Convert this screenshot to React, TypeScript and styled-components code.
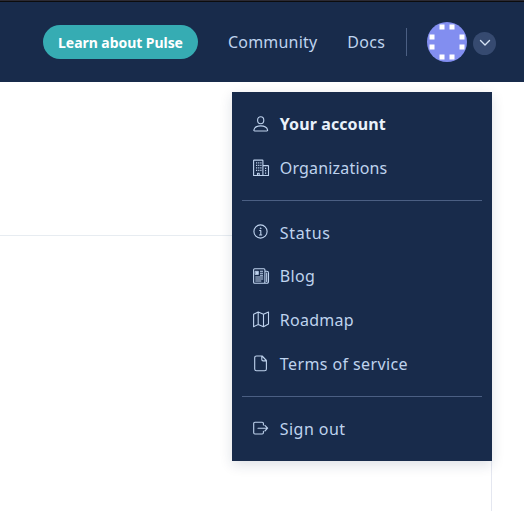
import React from "react";
import styled, { createGlobalStyle } from "styled-components";

const GlobalStyle = createGlobalStyle`
  * { box-sizing: border-box; }
  body { margin: 0; background: #fff; overflow: hidden; font-family: "Noto Sans", Roboto, sans-serif; }
`;

const Page = styled.div`
  position: relative;
  display: flex;
  flex-direction: column;
  width: 524px;
  height: 511px;
`;

const Header = styled.header`
  display: flex;
  align-items: center;
  height: 82px;
  padding: 1px 28px 0 43px;
  background: #182b4b;
  border-top: 1px solid #2b2a33;
  box-shadow: inset 0 1px 0 #0c0c0d;
`;

const PulseButton = styled.button`
  width: 155px;
  height: 34px;
  margin-bottom: 1px;
  padding: 1px 0 0;
  border: 0;
  border-radius: 17px;
  background: #36acb3;
  color: #fff;
  font: 700 14px/34px "Noto Sans", sans-serif;
  letter-spacing: -0.05px;
  white-space: nowrap;
`;

const NavLink = styled.a<{ $spacing: number }>`
  margin-left: 30px;
  margin-bottom: 1px;
  color: #bfd3ee;
  font-size: 16px;
  line-height: 24px;
  letter-spacing: ${(p) => p.$spacing}px;
`;

const Separator = styled.span`
  width: 1px;
  height: 28px;
  margin-left: auto;
  background: #4b5f83;
`;

const Avatar = styled.svg`
  width: 40px;
  height: 40px;
  margin: 0 0 1px 20px;
`;

const Toggle = styled.button`
  display: flex;
  align-items: center;
  justify-content: center;
  width: 23px;
  height: 23px;
  margin: 2px 0 0 6px;
  padding: 0;
  border: 0;
  border-radius: 50%;
  background: #364a70;
`;

const Content = styled.main`
  width: 492px;
  flex: 1;
  margin-top: 153px;
  border-top: 1px solid #e7ecf1;
  border-right: 1px solid #e4e7f0;
`;

const Menu = styled.nav`
  position: absolute;
  top: 92px;
  left: 232px;
  width: 260px;
  height: 369px;
  padding: 10px;
  background: #182b4b;
  box-shadow: 0 4px 12px rgba(24, 43, 75, 0.14);
`;

const MenuItem = styled.a<{ $strong?: boolean; $spacing: number }>`
  display: flex;
  align-items: center;
  height: 43.8px;
  padding-left: 11px;
  gap: 10.8px;
  color: ${(p) => (p.$strong ? "#e9f2fb" : "#bfd3ee")};
  font-size: 16px;
  font-weight: ${(p) => (p.$strong ? 700 : 400)};
  letter-spacing: ${(p) => p.$spacing}px;
  white-space: nowrap;
`;

const Label = styled.span`
  line-height: 20px;
  padding-top: 0.2px;
`;

const Icon = styled.svg.attrs({ viewBox: "0 0 16 16" })`
  width: 16px;
  height: 16px;
  flex: none;
  overflow: visible;
  fill: none;
  stroke: #bfd3ee;
  stroke-width: 1.1;
  stroke-linecap: round;
  stroke-linejoin: round;
`;

const Divider = styled.hr`
  height: 1px;
  margin: 10px 0;
  border: 0;
  background: #4b5f83;
`;

const icons = {
  person: (
    <>
      <ellipse cx="7.7" cy="4.2" rx="3.1" ry="3.5" />
      <path d="M1.6 15h12.2c.6 0 .9-.4.8-.9C14 11.3 11.5 9.9 7.7 9.9S1.4 11.3.9 14.1c-.1.5.2.9.7.9Z" />
    </>
  ),
  building: (
    <>
      <path d="M.6 15.5V.6a.5.5 0 0 1 .5-.5h8.3a.5.5 0 0 1 .5.5v14.9H.6Zm9.3-9.900h5.1a.5.5 0 0 1 .5.5v9.400H9.900M4.500 15.500v-2.300h1.700v2.300" />
      <path d="M3 2.800h5.500M3 5.300h5.500M3 7.800h5.500M3 10.300h5.500M12 8.300h2M12 10.700h2M12 13.100h2M3 12.700v.1M8 12.700v.1" strokeWidth="1.3" strokeDasharray="1.2 0.95" strokeLinecap="butt" />
    </>
  ),
  info: (
    <>
      <circle cx="7.5" cy="7.5" r="6.6" />
      <path d="M6.2 6.500h1.600v4.300M6.100 11h3.100" strokeLinecap="butt" />
      <circle cx="7.5" cy="4.3" r=".5" fill="#bfd3ee" strokeWidth=".6" />
    </>
  ),
  newspaper: (
    <>
      <path d="M1.6.7h9.300c.6 0 1 .4 1 1v12.600c0 .6-.4 1-1 1H1.600c-.6 0-1-.4-1-1V1.700c0-.6.4-1 1-1Zm10.300 2.600h2c1 0 1.600.7 1.600 1.600v8.300c0 1.200-.7 2.100-1.800 2.100h-2.200M13.700 5v8.500" />
      <path d="M2.400 3.300h3v3.200h-3Z" fill="#bfd3ee" strokeWidth=".7" />
      <path d="M7 3.200h3M7 5.200h3M7 7.200h3M2.300 9h7.900M2.300 11h7.900M2.300 13h6" strokeLinecap="butt" />
    </>
  ),
  map: <path d="M.6 2.300 5.200 0l5.300 2.300L15.500 0v12.100l-5 2.600-5.300-2.300-4.600 2.300V2.300ZM5.200 0v12.400M10.500 2.300v12.400" />,
  file: <path d="M3.500 0h5.600l4.300 4.500V13c0 1.100-.8 1.800-1.800 1.800H3.500c-1 0-1.800-.7-1.800-1.800V1.800C1.700.7 2.500 0 3.500 0ZM8.800.2v3.400c0 .8.500 1.300 1.300 1.300h3.100" />,
  exit: <path d="M10.400 3.900V2.500c0-.7-.5-1.200-1.200-1.200H1.900c-.7 0-1.200.5-1.200 1.200v9.300c0 .7.500 1.200 1.200 1.200h7.300c.7 0 1.200-.5 1.200-1.200v-1.400M5 7.200h9.500M11.900 4.400l2.700 2.800-2.700 2.800" />,
};

const dots = [
  [13, 3], [23, 3], [3, 13], [33, 13], [3, 23], [33, 23], [13, 33], [23, 33],
];

type Item = { label: string; icon: keyof typeof icons; spacing: number; strong?: boolean };

const groups: Item[][] = [
  [
    { label: "Your account", icon: "person", spacing: 0.1, strong: true },
    { label: "Organizations", icon: "building", spacing: 0.17 },
  ],
  [
    { label: "Status", icon: "info", spacing: 0.65 },
    { label: "Blog", icon: "newspaper", spacing: 0.3 },
    { label: "Roadmap", icon: "map", spacing: 0.25 },
    { label: "Terms of service", icon: "file", spacing: 0.4 },
  ],
  [{ label: "Sign out", icon: "exit", spacing: 0.45 }],
];

export default function App() {
  return (
    <Page>
      <GlobalStyle />
      <Header>
        <PulseButton>Learn about Pulse</PulseButton>
        <NavLink $spacing={0.2}>Community</NavLink>
        <NavLink $spacing={0.3}>Docs</NavLink>
        <Separator />
        <Avatar viewBox="0 0 40 40">
          <circle cx="20" cy="20" r="20" fill="#828ef0" />
          {dots.map(([x, y]) => (
            <rect key={`${x}-${y}`} x={x - 0.5} y={y - 0.5} width="5" height="5" fill="#fff" />
          ))}
        </Avatar>
        <Toggle aria-label="Open account menu">
          <svg width="12" height="8" viewBox="0 0 12 8" fill="none" stroke="#d5e3f5" strokeWidth="1.4" strokeLinecap="round" strokeLinejoin="round">
            <path d="M1.5 1.5 6 6l4.5-4.5" />
          </svg>
        </Toggle>
      </Header>
      <Content />
      <Menu>
        {groups.map((items, i) => (
          <React.Fragment key={i}>
            {i > 0 && <Divider />}
            {items.map(({ label, icon, spacing, strong }) => (
              <MenuItem key={label} $spacing={spacing} $strong={strong}>
                <Icon>{icons[icon]}</Icon>
                <Label>{label}</Label>
              </MenuItem>
            ))}
          </React.Fragment>
        ))}
      </Menu>
    </Page>
  );
}
